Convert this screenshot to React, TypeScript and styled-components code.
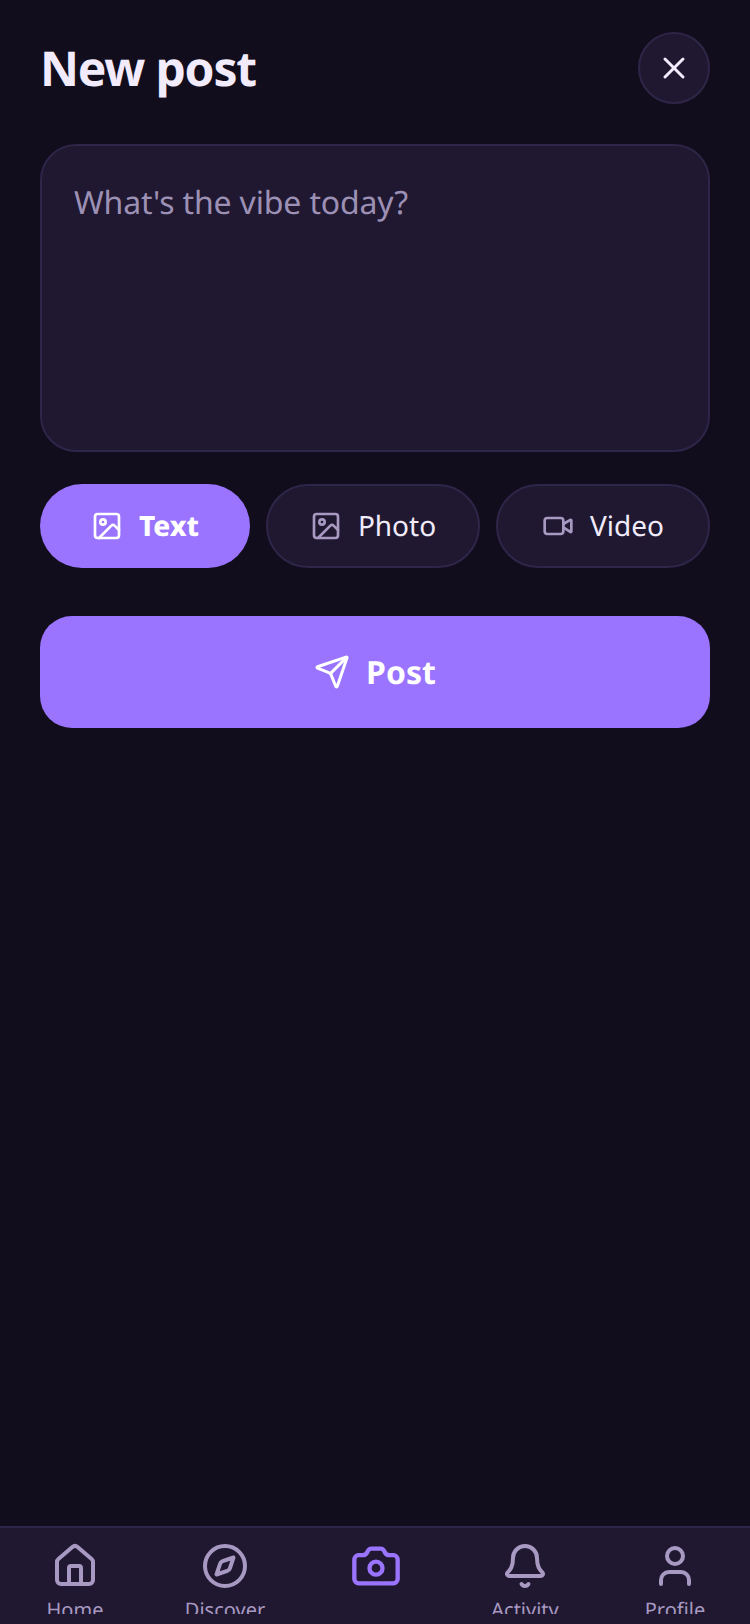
import React from "react";
import styled, { createGlobalStyle } from "styled-components";
import { X, Image, Video, Send, House, Compass, Camera, Bell, User } from "lucide-react";

const Global = createGlobalStyle`
  html, body { margin: 0; padding: 0; background: #110d1d; }
  * { box-sizing: border-box; }
`;

const Screen = styled.div`
  width: 750px;
  height: 1624px;
  display: flex;
  flex-direction: column;
  background: #110d1d;
  font-family: "Noto Sans", sans-serif;
  text-rendering: geometricPrecision;
  overflow: hidden;
`;

const Main = styled.main`
  flex: 1;
  display: flex;
  flex-direction: column;
  padding: 32px 40px 0;
`;

const Header = styled.header`
  display: flex;
  align-items: center;
  justify-content: space-between;
  height: 72px;
  margin-bottom: 40px;
`;

const Title = styled.h1`
  margin: 0;
  font-size: 48px;
  font-weight: 700;
  letter-spacing: -1.2px;
  color: #f1ebfb;
`;

const CloseButton = styled.button`
  width: 72px;
  height: 72px;
  padding: 0;
  border-radius: 50%;
  border: 2px solid #2e2648;
  background: #1f1830;
  color: #f1ebfb;
  display: flex;
  align-items: center;
  justify-content: center;
`;

const Composer = styled.textarea`
  height: 308px;
  padding: 33px 32px 32px;
  border-radius: 36px;
  border: 2px solid #2e2648;
  background: #1f1830;
  resize: none;
  outline: none;
  font-family: inherit;
  text-rendering: geometricPrecision;
  font-size: 32px;
  letter-spacing: -0.15px;
  line-height: 48px;
  color: #f1ebfb;
  &::placeholder { color: #9d90b5; opacity: 1; }
`;

const Chips = styled.div`
  display: flex;
  gap: 16px;
  margin-top: 32px;
`;

const Chip = styled.button<{ $active?: boolean }>`
  flex: 1 1 0;
  height: 84px;
  display: flex;
  align-items: center;
  justify-content: center;
  gap: 16px;
  padding: 0;
  border-radius: 42px;
  border: ${(p) => (p.$active ? "none" : "2px solid #2e2648")};
  background: ${(p) => (p.$active ? "#9a74ff" : "#1f1830")};
  color: ${(p) => (p.$active ? "#ffffff" : "#f1ebfb")};
  font-family: inherit;
  text-rendering: geometricPrecision;
  font-size: 28px;
  font-weight: ${(p) => (p.$active ? 800 : 400)};
  svg { color: ${(p) => (p.$active ? "#ffffff" : "#a899c2")}; }
`;

const PostButton = styled.button`
  height: 112px;
  margin-top: 48px;
  display: flex;
  align-items: center;
  justify-content: center;
  gap: 16px;
  border: none;
  border-radius: 32px;
  background: #9a74ff;
  color: #ffffff;
  font-family: inherit;
  text-rendering: geometricPrecision;
  font-size: 32px;
  font-weight: 700;
`;

const Nav = styled.nav`
  height: 98px;
  flex: none;
  display: flex;
  border-top: 2px solid #2e2648;
  background: #1f1830;
  padding: 14px 0 0;
`;

const NavItem = styled.div<{ $active?: boolean }>`
  flex: 1;
  min-width: 0;
  height: 72px;
  overflow: ${(p) => (p.$active ? "visible" : "hidden")};
  display: flex;
  flex-direction: column;
  align-items: center;
  gap: 6px;
  color: ${(p) => (p.$active ? "#9a74ff" : "#a899c2")};
  svg {
    flex: none;
    margin: ${(p) => (p.$active ? "-2px 0 0 2px" : "0")};
  }
`;

const NavLabel = styled.span`
  font-size: 20px;
  line-height: 28px;
`;

const items = [
  { label: "Home", Icon: House, size: 48 },
  { label: "Discover", Icon: Compass, size: 48 },
  { label: "", Icon: Camera, size: 52, active: true },
  { label: "Activity", Icon: Bell, size: 48 },
  { label: "Profile", Icon: User, size: 48 },
];

export default function App() {
  return (
    <Screen>
      <Global />
      <Main>
        <Header>
          <Title>New post</Title>
          <CloseButton aria-label="Close"><X size={36} strokeWidth={2} /></CloseButton>
        </Header>
        <Composer placeholder="What's the vibe today?" />
        <Chips>
          <Chip $active><Image size={32} strokeWidth={2} />Text</Chip>
          <Chip><Image size={32} strokeWidth={2} />Photo</Chip>
          <Chip><Video size={32} strokeWidth={2} />Video</Chip>
        </Chips>
        <PostButton><Send size={36} strokeWidth={2} />Post</PostButton>
      </Main>
      <Nav>
        {items.map(({ label, Icon, size, active }) => (
          <NavItem key={size + label} $active={active}>
            <Icon size={size} strokeWidth={2} />
            {label && <NavLabel>{label}</NavLabel>}
          </NavItem>
        ))}
      </Nav>
    </Screen>
  );
}
